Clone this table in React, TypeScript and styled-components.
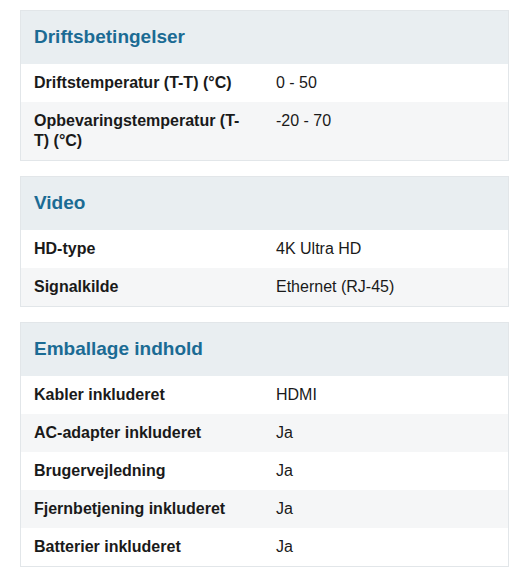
import React from "react";
import styled, { createGlobalStyle } from "styled-components";

const Global = createGlobalStyle`
  html, body { margin: 0; padding: 0; background: #ffffff; }
  body { font-family: "Liberation Sans", Arial, sans-serif; }
`;

const Page = styled.div`
  display: flex;
  flex-direction: column;
  gap: 15px;
  padding: 10px 21px 10px 20px;
`;

const Card = styled.section`
  border: 1px solid #e2e6e9;
  background: #ffffff;
`;

const Header = styled.h2`
  margin: 0;
  background: #e9eef1;
  color: #1b6b94;
  font-size: 19px;
  font-weight: 700;
  line-height: 22px;
  padding: 15px 13px 16px;
`;

const Row = styled.div<{ $alt: boolean }>`
  display: grid;
  grid-template-columns: 255px 1fr;
  background: ${(p) => (p.$alt ? "#f5f6f7" : "#ffffff")};
  font-size: 16px;
  line-height: 20px;
  color: #1a1a1a;
`;

const Label = styled.div`
  font-weight: 700;
  padding: 9px 24px 9px 13px;
`;

const Value = styled.div`
  padding: 9px 13px 9px 0;
`;

type Section = { title: string; rows: [string, string][] };

const sections: Section[] = [
  {
    title: "Driftsbetingelser",
    rows: [
      ["Driftstemperatur (T-T) (°C)", "0 - 50"],
      ["Opbevaringstemperatur (T-T) (°C)", "-20 - 70"],
    ],
  },
  {
    title: "Video",
    rows: [
      ["HD-type", "4K Ultra HD"],
      ["Signalkilde", "Ethernet (RJ-45)"],
    ],
  },
  {
    title: "Emballage indhold",
    rows: [
      ["Kabler inkluderet", "HDMI"],
      ["AC-adapter inkluderet", "Ja"],
      ["Brugervejledning", "Ja"],
      ["Fjernbetjening inkluderet", "Ja"],
      ["Batterier inkluderet", "Ja"],
    ],
  },
];

export default function App() {
  return (
    <>
      <Global />
      <Page>
        {sections.map((s) => (
          <Card key={s.title}>
            <Header>{s.title}</Header>
            {s.rows.map(([l, v], i) => (
              <Row key={l} $alt={i % 2 === 1}>
                <Label>{l}</Label>
                <Value>{v}</Value>
              </Row>
            ))}
          </Card>
        ))}
      </Page>
    </>
  );
}
